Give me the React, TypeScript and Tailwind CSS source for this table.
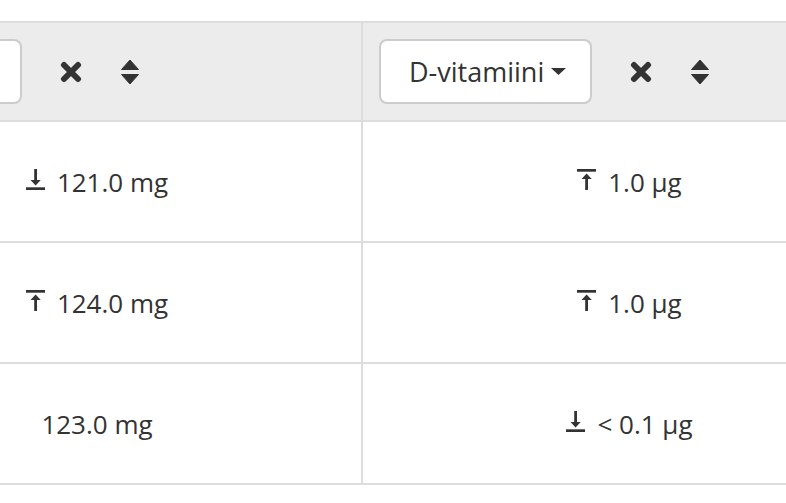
import React from 'react';

type Limit = 'min' | 'max' | null;

interface Cell {
  value: string;
  limit: Limit;
}

const rows: Cell[][] = [
  [{ value: '121.0 mg', limit: 'min' }, { value: '1.0 µg', limit: 'max' }],
  [{ value: '124.0 mg', limit: 'max' }, { value: '1.0 µg', limit: 'max' }],
  [{ value: '123.0 mg', limit: null }, { value: '< 0.1 µg', limit: 'min' }],
];

// first column's selector is scrolled out of view, only its right edge shows
const columns = ['', 'D-vitamiini'];

// arrow to bar, down (minimum) or up (maximum)
const LimitIcon: React.FC<{ limit: Limit }> = ({ limit }) => {
  if (limit === 'min') {
    return (
      <svg width="19" height="21" viewBox="0 0 19 21" className="mt-[-5px] shrink-0">
        <rect x="8.2" y="0" width="2.8" height="13" fill="#333333" />
        <path d="M4.5 11 L14.7 11 L9.6 16.5 Z" fill="#333333" />
        <rect x="0" y="18.3" width="19" height="2.7" fill="#333333" />
      </svg>
    );
  }
  if (limit === 'max') {
    return (
      <svg width="19" height="21" viewBox="0 0 19 21" className="mt-[-5px] shrink-0">
        <rect x="0" y="0" width="19" height="2.7" fill="#333333" />
        <path d="M4.5 10 L14.7 10 L9.6 4.5 Z" fill="#333333" />
        <rect x="8.2" y="8" width="2.8" height="13" fill="#333333" />
      </svg>
    );
  }
  return null;
};

const RemoveIcon = () => (
  <svg width="22" height="22" viewBox="0 0 22 22">
    <path d="M4 4 L18 18 M18 4 L4 18" stroke="#333333" strokeWidth="6" strokeLinecap="round" />
  </svg>
);

const SortIcon = () => (
  <svg width="18" height="26" viewBox="0 0 18 26">
    <path d="M9 1 L17.5 10.5 L0.5 10.5 Z" fill="#333333" strokeLinejoin="round" stroke="#333333" strokeWidth="1" />
    <path d="M0.5 15.5 L17.5 15.5 L9 25 Z" fill="#333333" strokeLinejoin="round" stroke="#333333" strokeWidth="1" />
  </svg>
);

const Caret = () => (
  <svg width="15" height="7" viewBox="0 0 15 7" className="ml-[7px] shrink-0">
    <path d="M0 0 L15 0 L7.5 7 Z" fill="#333333" />
  </svg>
);

export default function App() {
  return (
    <div
      className="h-[503px] w-[786px] overflow-hidden bg-white pt-[21px] text-[#333333]"
      style={{ fontFamily: '"Open Sans", "Noto Sans", sans-serif' }}
    >
      <div className="ml-[-167px] w-[1063px]">
        {/* Header */}
        <div className="grid grid-cols-[530px_533px] border-y-2 border-[#dddddd] bg-[#ececec]">
          {columns.map((label, i) => (
            <div
              key={i}
              className={
                i === 0
                  ? 'flex h-[97px] items-center border-r-2 border-[#dddddd] pl-[17px]'
                  : 'flex h-[97px] items-center pl-[16px]'
              }
            >
              {label ? (
                <button className="flex h-[65px] items-center whitespace-nowrap rounded-[8px] border-2 border-[#cccccc] bg-white pl-[28px] pr-[24px] text-[27px]">
                  <span className="leading-none">{label}</span>
                  <Caret />
                </button>
              ) : (
                <div className="h-[65px] w-[172px] rounded-[8px] border-2 border-[#cccccc] bg-white" />
              )}
              <div className="ml-[38px] flex items-center">
                <RemoveIcon />
              </div>
              <div className="ml-[39px] flex items-center">
                <SortIcon />
              </div>
            </div>
          ))}
        </div>

        {/* Body */}
        {rows.map((row, r) => (
          <div key={r} className="grid grid-cols-[530px_533px] border-b-2 border-[#dddddd]">
            {row.map((cell, c) => (
              <div
                key={c}
                className={
                  c === 0
                    ? 'flex h-[119px] items-center justify-center gap-[12px] border-r-2 border-[#dddddd] text-[26px]'
                    : 'flex h-[119px] items-center justify-center gap-[12px] text-[26px]'
                }
              >
                <LimitIcon limit={cell.limit} />
                <span className="leading-none">{cell.value}</span>
              </div>
            ))}
          </div>
        ))}
      </div>
    </div>
  );
}
